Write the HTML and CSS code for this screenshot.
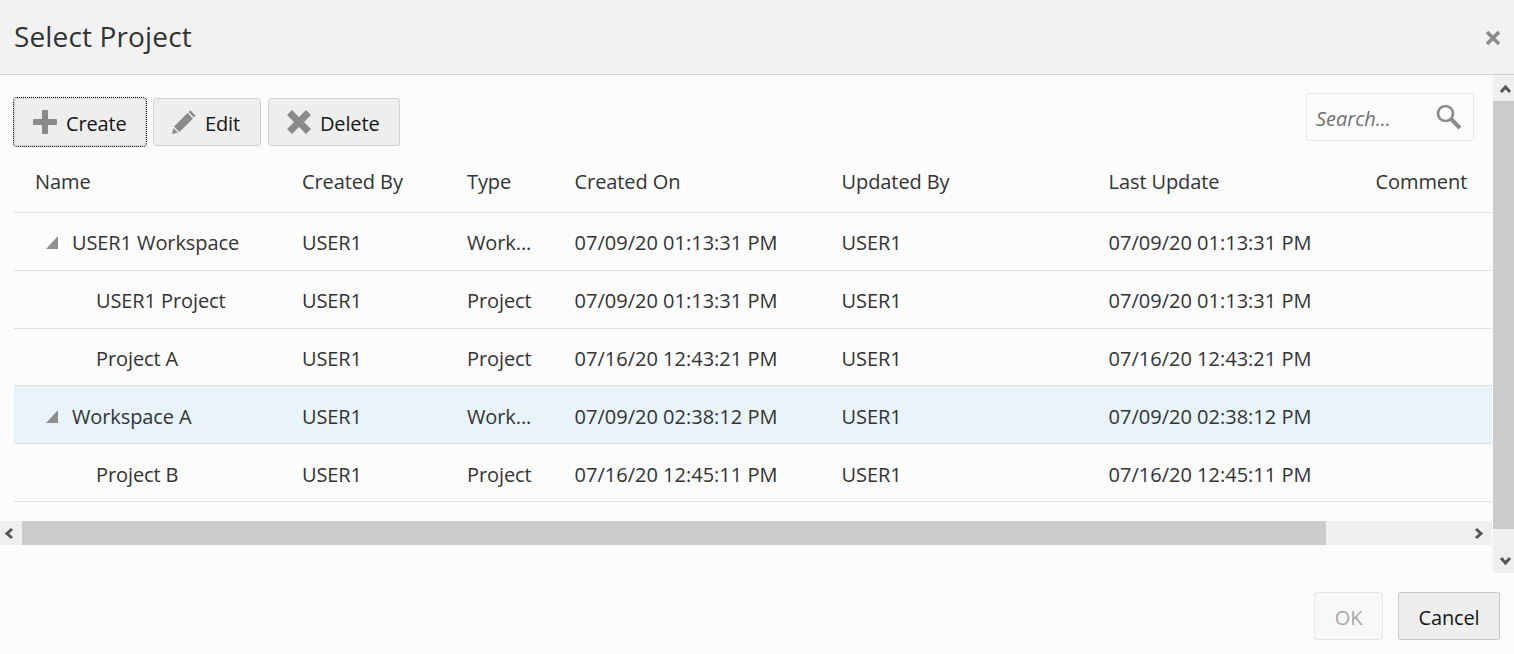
FILE: index.html
```html
<!DOCTYPE html>
<html lang="en">
<head>
<meta charset="utf-8">
<title>Select Project</title>
<link rel="stylesheet" href="styles.css">
</head>
<body>
<div class="dialog">
  <header class="title-bar">
    <h1 class="title">Select Project</h1>
    <svg class="close" width="16" height="16" viewBox="0 0 16 16"><path d="M2 2L14 14M14 2L2 14" stroke="#8c8c8c" stroke-width="3.6" fill="none"/></svg>
  </header>
  <div class="body">
    <div class="content">
      <div class="main">
        <div class="toolbar">
          <button class="btn btn-create"><svg class="ico" width="24" height="24" viewBox="0 0 24 24"><path d="M9 1a1 1 0 0 1 1-1h4a1 1 0 0 1 1 1v8h8a1 1 0 0 1 1 1v4a1 1 0 0 1-1 1h-8v8a1 1 0 0 1-1 1h-4a1 1 0 0 1-1-1v-8H1a1 1 0 0 1-1-1v-4a1 1 0 0 1 1-1h8z" fill="#8a8a8a"/></svg>Create</button>
          <button class="btn btn-edit"><svg class="ico" width="24" height="24" viewBox="0 0 24 24"><path d="M18.500 0.500L23.500 5.500 22 7.500 16.500 2zM15.500 3L21 8.500 7.500 22 2 16.500zM1.300 18L6 22.700 0 24z" fill="#8a8a8a"/></svg>Edit</button>
          <button class="btn btn-delete"><svg class="ico" width="24" height="24" viewBox="0 0 24 24"><path d="M5 0L12 7 19 0 24 5 17 12 24 19 19 24 12 17 5 24 0 19 7 12 0 5z" fill="#8a8a8a"/></svg>Delete</button>
          <div class="search">
            <span class="search-text">Search...</span>
            <svg width="26" height="26" viewBox="0 0 26 26"><circle cx="9.500" cy="9.500" r="7.500" fill="none" stroke="#8a8a8a" stroke-width="2.600"/><path d="M15 15L24 24" stroke="#8a8a8a" stroke-width="4"/></svg>
          </div>
        </div>
        <div class="table">
          <div class="row head"><span class="c-name">Name</span><span>Created By</span><span>Type</span><span>Created On</span><span>Updated By</span><span>Last Update</span><span>Comment</span></div>
          <div class="row"><span class="c-name lvl0"><i class="tri"></i>USER1 Workspace</span><span>USER1</span><span>Work...</span><span class="date">07/09/20 01:13:31 PM</span><span>USER1</span><span class="date">07/09/20 01:13:31 PM</span><span></span></div>
          <div class="row"><span class="c-name lvl1">USER1 Project</span><span>USER1</span><span>Project</span><span class="date">07/09/20 01:13:31 PM</span><span>USER1</span><span class="date">07/09/20 01:13:31 PM</span><span></span></div>
          <div class="row"><span class="c-name lvl1">Project A</span><span>USER1</span><span>Project</span><span class="date">07/16/20 12:43:21 PM</span><span>USER1</span><span class="date">07/16/20 12:43:21 PM</span><span></span></div>
          <div class="row selected"><span class="c-name lvl0"><i class="tri"></i>Workspace A</span><span>USER1</span><span>Work...</span><span class="date">07/09/20 02:38:12 PM</span><span>USER1</span><span class="date">07/09/20 02:38:12 PM</span><span></span></div>
          <div class="row"><span class="c-name lvl1">Project B</span><span>USER1</span><span>Project</span><span class="date">07/16/20 12:45:11 PM</span><span>USER1</span><span class="date">07/16/20 12:45:11 PM</span><span></span></div>
        </div>
      </div>
      <div class="hscroll">
        <svg class="arrow" width="22" height="24" viewBox="0 0 22 24"><path d="M12 8L7 12.500 12 17" fill="none" stroke="#555" stroke-width="3"/></svg>
        <div class="hthumb"></div>
        <div class="htrack"></div>
        <svg class="arrow" width="28" height="24" viewBox="0 0 28 24"><path d="M12 8L17 12.500 12 17" fill="none" stroke="#555" stroke-width="3"/></svg>
      </div>
    </div>
    <div class="vscroll">
      <svg class="arrow" width="21" height="26" viewBox="0 0 21 26"><path d="M8 17L12.500 12 17 17" fill="none" stroke="#555" stroke-width="3"/></svg>
      <div class="vthumb"></div>
      <svg class="arrow" width="21" height="44" viewBox="0 0 21 44"><path d="M8 29L12.500 34 17 29" fill="none" stroke="#555" stroke-width="3"/></svg>
    </div>
  </div>
  <footer class="footer">
    <button class="btn btn-ok">OK</button>
    <button class="btn btn-cancel">Cancel</button>
  </footer>
</div>
</body>
</html>
```

FILE: styles.css
```css
* { box-sizing: border-box; }
html, body { margin: 0; height: 100%; overflow: hidden; }
body { font-family: "Open Sans", "Noto Sans", sans-serif; color: #333; background: #fcfcfc; }
.dialog { width: 1514px; height: 654px; display: flex; flex-direction: column; }
.title-bar { height: 75px; flex: none; background: #f2f2f2; border-bottom: 1px solid #cfcfcf; display: flex; align-items: center; justify-content: space-between; padding: 0 13px 2px 14px; }
.title { margin: 0; font-size: 28px; font-weight: 400; color: #333; letter-spacing: 0.14px; }
.close { margin-top: 3px; }
.body { height: 498px; flex: none; display: flex; }
.content { width: 1493px; flex: none; display: flex; flex-direction: column; }
.main { height: 446px; flex: none; padding: 18px 1px 0 14px; }
.toolbar { display: flex; align-items: flex-start; gap: 7px; height: 69px; padding-top: 5px; }
.btn { height: 48px; font: inherit; font-size: 20px; letter-spacing: -0.15px; color: #161616; background: #eeeeee; border: 1px solid #d2d2d2; border-radius: 3px; padding: 2px 0 0 18px; display: flex; align-items: center; justify-content: flex-start; }
.btn-create { width: 132px; outline: 1px dotted #000; }
.btn-edit { width: 108px; }
.btn-delete { width: 132px; }
.ico { margin: -2px 9px 0 0; flex: none; }
.search { margin-left: auto; margin-right: 18px; margin-top: -5px; width: 168px; height: 48px; border: 1px solid #e6e6e6; border-radius: 3px; background: #fcfcfc; display: flex; align-items: center; justify-content: space-between; padding: 0 11px 0 9px; }
.search-text { font-style: italic; font-size: 20px; color: #707070; padding-top: 2px; }
.table { display: flex; flex-direction: column; }
.row { height: 57.8px; flex: none; display: grid; grid-template-columns: 288px 165px 107.6px 267px 267px 267px 116px; align-items: center; border-bottom: 1px solid #e0e0e0; padding-top: 3px; font-size: 20px; letter-spacing: -0.1px; color: #333; white-space: nowrap; }
.row.head { height: 60px; padding: 0 0 2px; margin-top: -9px; }
.date { letter-spacing: 0; }
.selected { background: #e8f3fa; }
.c-name { padding-left: 21px; display: flex; align-items: center; }
.lvl0 { padding-left: 32px; }
.lvl1 { padding-left: 82px; }
.tri { width: 0; height: 0; border-style: solid; border-width: 0 0 13px 12px; border-color: transparent transparent #8f8f8f transparent; margin-right: 14px; }
.hscroll { height: 24px; flex: none; display: flex; width: 1492px; background: #efefef; }
.arrow { flex: none; display: block; }
.hthumb { width: 1304px; background: #cbcbcb; }
.htrack { flex: 1; }
.vscroll { width: 21px; flex: none; display: flex; flex-direction: column; background: #efefef; }
.vthumb { flex: 1; background: #cbcbcb; }
.footer { flex: 1; display: flex; justify-content: flex-end; align-items: flex-start; gap: 15px; padding: 19px 14px 0 0; }
.btn-ok { width: 69px; color: #a8a8a8; background: #f8f8f8; border-color: #e6e6e6; padding: 2px 0 0; justify-content: center; }
.btn-cancel { width: 102px; border-color: #c8c8c8; padding: 2px 0 0; justify-content: center; }
```
